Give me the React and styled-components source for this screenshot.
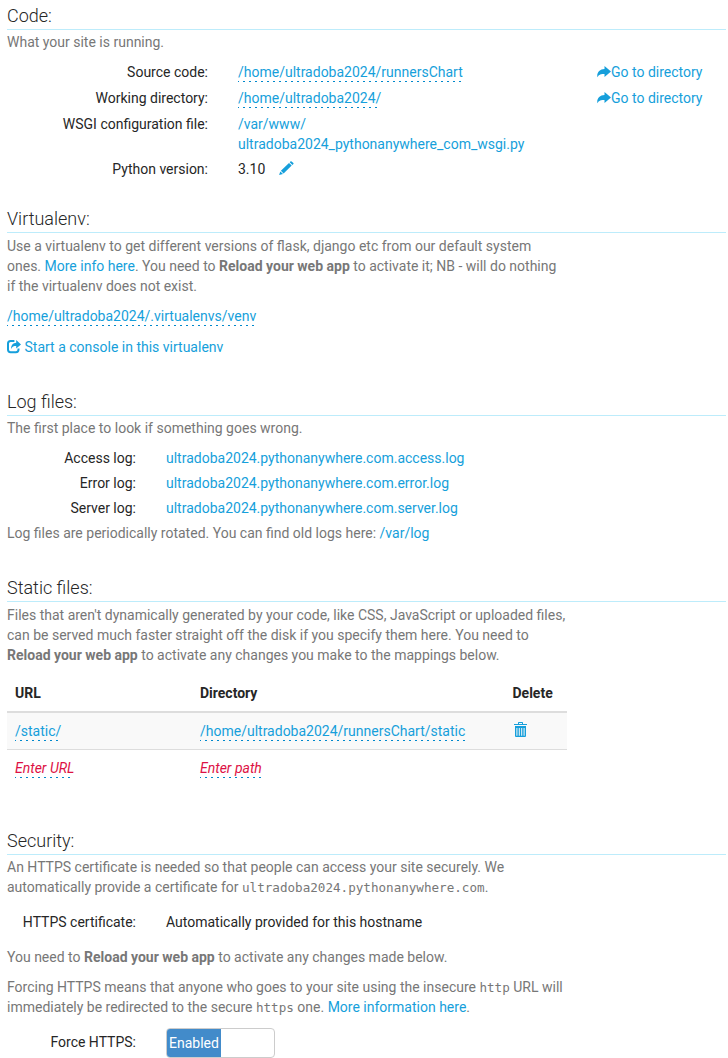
import React from "react";
import styled, { createGlobalStyle } from "styled-components";

const Global = createGlobalStyle`
  * { box-sizing: border-box; }
  body {
    margin: 0;
    background: #fff;
    color: #262626;
    font: 14px/20px Roboto, "Liberation Sans", sans-serif;
  }
`;

const Page = styled.main`
  width: 728px;
  height: 1058px;
  padding: 0 2px 0 7px;
  overflow: hidden;
`;

const Section = styled.section`
  padding-top: ${(p) => p.$top}px;
`;

const Heading = styled.h4`
  margin: 0 0 ${(p) => p.$gap}px;
  height: 24px;
  border-bottom: 1px solid #bdecfb;
  font-size: 18px;
  font-weight: 300;
  line-height: 20px;
`;

const Text = styled.p`
  width: 562px;
  margin: 0 0 10px;
  color: #777;
`;

const Row = styled.div`
  display: grid;
  grid-template-columns: ${(p) => (p.$wide ? "201px 329px 1fr" : "129px 1fr")};
  column-gap: 30px;
  margin-bottom: ${(p) => p.$gap}px;
`;

const Label = styled.div`
  text-align: right;
  white-space: nowrap;
`;

const Value = styled.div`
  white-space: nowrap;
`;

const Link = styled.a`
  color: #169fdb;
`;

const Editable = styled(Link)`
  padding-bottom: 2px;
  background: repeating-linear-gradient(90deg, #0088cc 0 1px, transparent 1px 5px, #0088cc 5px 6px) left bottom / 100% 1px no-repeat;
`;

const Empty = styled(Editable)`
  color: #dd1144;
  font-style: italic;
`;

const Code = styled.code`
  font-family: "DejaVu Sans Mono", monospace;
  font-size: 12.6px;
  line-height: 1;
`;

const Icon = styled.svg`
  display: inline-block;
  fill: #169fdb;
  vertical-align: ${(p) => p.$drop}px;
  margin: 0 ${(p) => p.$right || 0}px 0 ${(p) => p.$left || 0}px;
`;

const Table = styled.table`
  width: 560px;
  table-layout: fixed;
  border-spacing: 0;
`;

const Th = styled.th`
  width: ${(p) => p.$w}px;
  height: 38px;
  padding: 8px 8px 8px ${(p) => p.$l || 8}px;
  border-bottom: 2px solid #ddd;
  text-align: left;
  font-weight: 700;
`;

const Td = styled.td`
  height: 37px;
  padding: 8px 8px 8px ${(p) => p.$l || 8}px;
  background: ${(p) => (p.$shade ? "#f9f9f9" : "#fff")};
  border-bottom: 1px solid ${(p) => (p.$shade ? "#ddd" : "transparent")};
  white-space: nowrap;
`;

const Toggle = styled.div`
  display: flex;
  width: 109px;
  height: 30px;
  margin-top: -4px;
  border: 1px solid #ccc;
  border-radius: 4px;
  overflow: hidden;
`;

const ToggleOn = styled.span`
  width: 54px;
  background: #428bca;
  color: #fff;
  line-height: 28px;
  text-align: center;
`;

const GoArrow = () => (
  <Icon width="14" height="12" viewBox="0 0 14 12" $drop={-1}>
    <path d="M7.5 0 14 5.5 7.5 11V7.9C4.2 7.9 1.8 8.4.3 11.2-.2 6.4 2.8 3.3 7.5 3.1Z" />
  </Icon>
);

const Pencil = () => (
  <Icon width="15" height="14" viewBox="0 0 15 14" $drop={-1} $left={13.5}>
    <path d="M10.7 1.2 11.7.3Q12.1 0 12.6.4L14.4 2.1Q14.8 2.6 14.4 3L13.4 3.9ZM10 1.9 12.7 4.6 4.6 12.4 1.9 9.7ZM1.3 10.4 4 13 .1 14Z" />
  </Icon>
);

const ShareBox = () => (
  <Icon width="14" height="14" viewBox="0 0 14 14" $drop={-2} $right={3.5}>
    <path d="M7.4 1H3.6Q1 1 1 3.6V9.6Q1 12.2 3.6 12.2H8.9Q11.5 12.2 11.5 9.6V8.6" fill="none" stroke="#169fdb" strokeWidth="2" />
    <path d="M9.2 0 14 4.4 9.2 8.6V6.1C6.8 6.1 5.2 6.6 4.1 9 3.9 5.3 6 2.8 9.2 2.7Z" />
  </Icon>
);

const Trash = () => (
  <Icon width="13" height="15" viewBox="0 0 13 15" $drop={-1}>
    <path fillRule="evenodd" d="M4 2V.8Q4 0 4.8 0H8.2Q9 0 9 .8V2H13V3H0V2ZM5 1V2H8V1ZM1 4H12V14Q12 15 11 15H2Q1 15 1 14ZM2.4 6V13.7H3.4V6ZM4.8 6V13.7H5.8V6ZM7.2 6V13.7H8.2V6ZM9.6 6V13.7H10.6V6Z" />
  </Icon>
);

export default function App() {
  return (
    <Page>
      <Global />
      <Section $top={6}>
        <Heading $gap={2}>Code:</Heading>
        <Text>What your site is running.</Text>
        <Row $wide $gap={6}>
          <Label>Source code:</Label>
          <Value><Editable>/home/ultradoba2024/runnersChart</Editable></Value>
          <Value><GoArrow /><Link>Go to directory</Link></Value>
        </Row>
        <Row $wide $gap={6}>
          <Label>Working directory:</Label>
          <Value><Editable>/home/ultradoba2024/</Editable></Value>
          <Value><GoArrow /><Link>Go to directory</Link></Value>
        </Row>
        <Row $wide $gap={5}>
          <Label>WSGI configuration file:</Label>
          <Value><Link>/var/www/<br />ultradoba2024_pythonanywhere_com_wsgi.py</Link></Value>
        </Row>
        <Row $wide $gap={0}>
          <Label>Python version:</Label>
          <Value>3.10<Pencil /></Value>
        </Row>
      </Section>

      <Section $top={30}>
        <Heading $gap={3}>Virtualenv:</Heading>
        <Text>
          Use a virtualenv to get different versions of flask, django etc from our default system<br />
          ones. <Link>More info here</Link>. You need to <b>Reload your web app</b> to activate it; NB - will do nothing<br />
          if the virtualenv does not exist.
        </Text>
        <Row $gap={11}>
          <Value><Editable>/home/ultradoba2024/.virtualenvs/venv</Editable></Value>
        </Row>
        <Value><ShareBox /><Link>Start a console in this virtualenv</Link></Value>
      </Section>

      <Section $top={35}>
        <Heading $gap={2}>Log files:</Heading>
        <Text>The first place to look if something goes wrong.</Text>
        {["access", "error", "server"].map((kind) => (
          <Row key={kind} $gap={5}>
            <Label>{kind[0].toUpperCase() + kind.slice(1)} log:</Label>
            <Value><Link>ultradoba2024.pythonanywhere.com.{kind}.log</Link></Value>
          </Row>
        ))}
        <Text>Log files are periodically rotated. You can find old logs here: <Link>/var/log</Link></Text>
      </Section>

      <Section $top={25}>
        <Heading $gap={3}>Static files:</Heading>
        <Text>
          Files that aren't dynamically generated by your code, like CSS, JavaScript or uploaded files,<br />
          can be served much faster straight off the disk if you specify them here. You need to<br />
          <b>Reload your web app</b> to activate any changes you make to the mappings below.
        </Text>
        <Table>
          <thead>
            <tr>
              <Th $w={185}>URL</Th>
              <Th $w={312}>Directory</Th>
              <Th $w={63} $l={8.5}>Delete</Th>
            </tr>
          </thead>
          <tbody>
            <tr>
              <Td $shade><Editable>/static/</Editable></Td>
              <Td $shade><Editable>/home/ultradoba2024/runnersChart/static</Editable></Td>
              <Td $shade $l={10}><Trash /></Td>
            </tr>
            <tr>
              <Td><Empty>Enter URL</Empty></Td>
              <Td><Empty>Enter path</Empty></Td>
              <Td />
            </tr>
          </tbody>
        </Table>
      </Section>

      <Section $top={44}>
        <Heading $gap={2}>Security:</Heading>
        <Text>
          An HTTPS certificate is needed so that people can access your site securely. We<br />
          automatically provide a certificate for <Code>ultradoba2024.pythonanywhere.com</Code>.
        </Text>
        <Section $top={5}>
          <Row $gap={15}>
            <Label>HTTPS certificate:</Label>
            <Value>Automatically provided for this hostname</Value>
          </Row>
        </Section>
        <Text>You need to <b>Reload your web app</b> to activate any changes made below.</Text>
        <Text>
          Forcing HTTPS means that anyone who goes to your site using the insecure <Code>http</Code> URL will<br />
          immediately be redirected to the secure <Code>https</Code> one. <Link>More information here</Link>.
        </Text>
        <Section $top={5}>
          <Row $gap={0}>
            <Label>Force HTTPS:</Label>
            <Toggle><ToggleOn>Enabled</ToggleOn></Toggle>
          </Row>
        </Section>
      </Section>
    </Page>
  );
}
